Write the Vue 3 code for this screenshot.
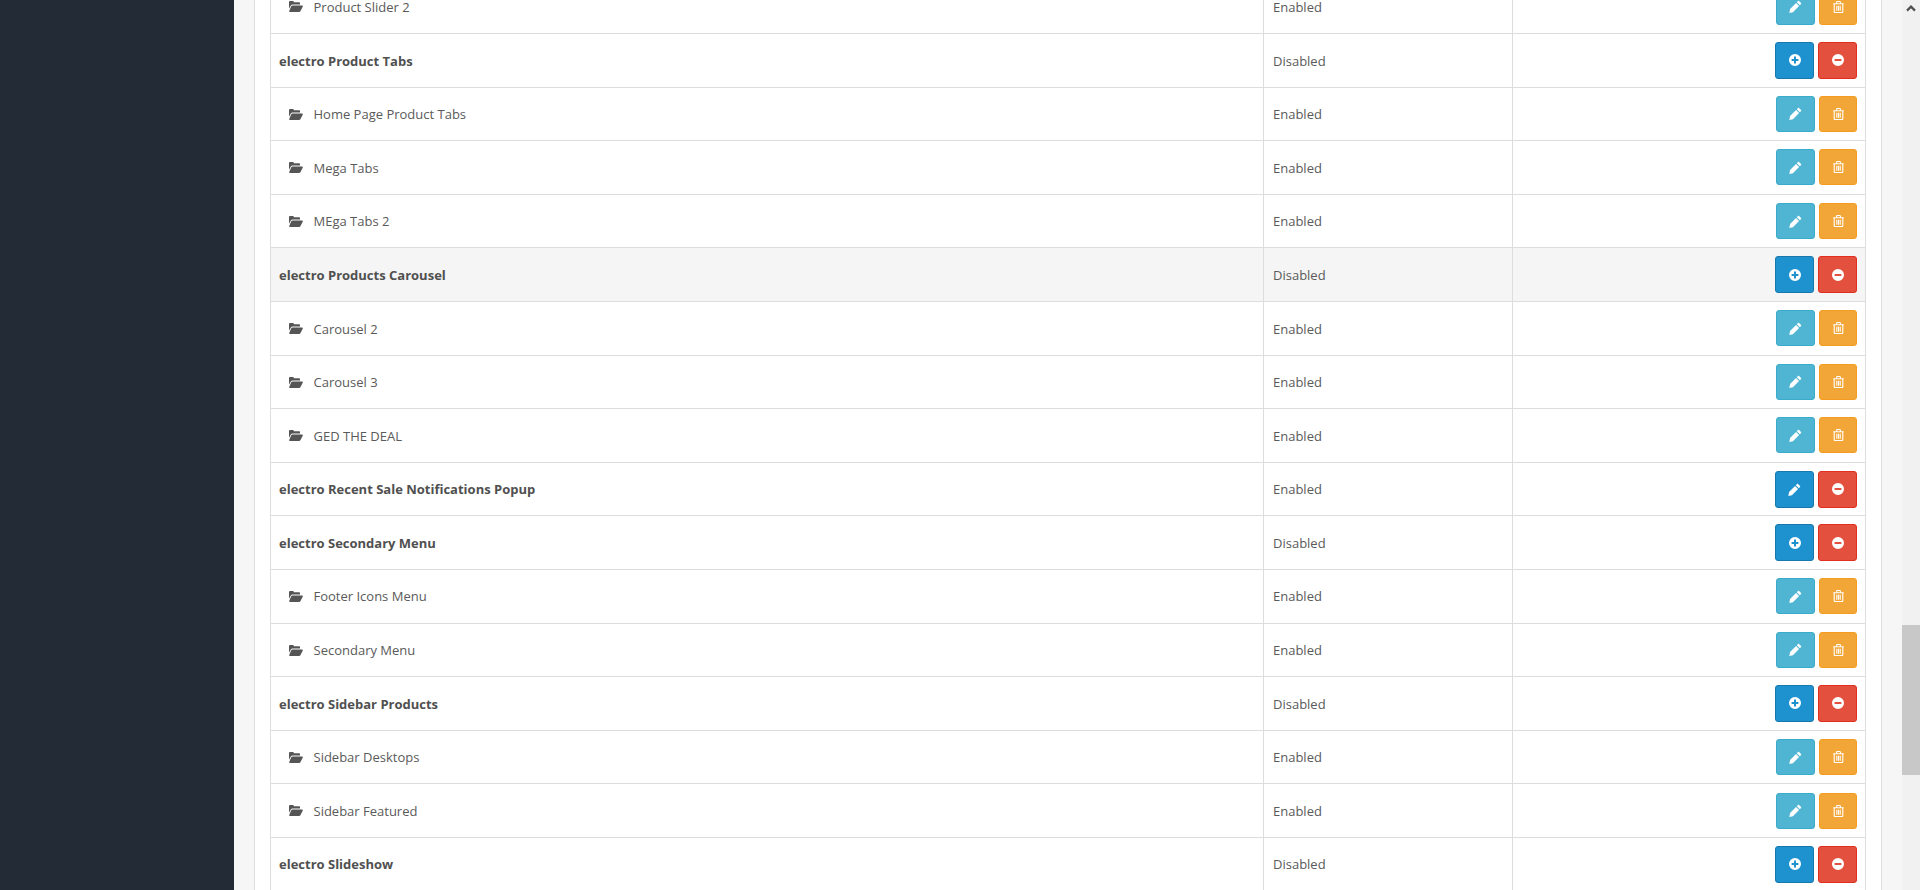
<script setup>
const rows = [
  { name: 'Product Slider 2', status: 'Enabled', kind: 'child' },
  { name: 'electro Product Tabs', status: 'Disabled', kind: 'add' },
  { name: 'Home Page Product Tabs', status: 'Enabled', kind: 'child' },
  { name: 'Mega Tabs', status: 'Enabled', kind: 'child' },
  { name: 'MEga Tabs 2', status: 'Enabled', kind: 'child' },
  { name: 'electro Products Carousel', status: 'Disabled', kind: 'add', hover: true },
  { name: 'Carousel 2', status: 'Enabled', kind: 'child' },
  { name: 'Carousel 3', status: 'Enabled', kind: 'child' },
  { name: 'GED THE DEAL', status: 'Enabled', kind: 'child' },
  { name: 'electro Recent Sale Notifications Popup', status: 'Enabled', kind: 'edit' },
  { name: 'electro Secondary Menu', status: 'Disabled', kind: 'add' },
  { name: 'Footer Icons Menu', status: 'Enabled', kind: 'child' },
  { name: 'Secondary Menu', status: 'Enabled', kind: 'child' },
  { name: 'electro Sidebar Products', status: 'Disabled', kind: 'add' },
  { name: 'Sidebar Desktops', status: 'Enabled', kind: 'child' },
  { name: 'Sidebar Featured', status: 'Enabled', kind: 'child' },
  { name: 'electro Slideshow', status: 'Disabled', kind: 'add' },
]
const pencil = 'M9.3.9 11.1 2.7c.3.3.3.7 0 1L10 4.8 7.2 2 8.3.9c.3-.3.7-.3 1 0ZM6.5 2.7 9.3 5.5 3.6 11.2.3 12l.7-3.6Z'
const plus = 'M6 0a6 6 0 1 0 0 12A6 6 0 0 0 6 0ZM5 2.6h2V5h2.4v2H7v2.4H5V7H2.6V5H5Z'
const minus = 'M6 0a6 6 0 1 0 0 12A6 6 0 0 0 6 0ZM2.6 5h6.8v2H2.6Z'
</script>

<template>
  <div class="page">
    <aside class="sidebar"></aside>
    <main class="main">
      <section class="panel">
        <div class="table">
          <div v-for="row in rows" :key="row.name" class="row" :class="{ hover: row.hover }">
            <div class="cell name" :class="{ strong: row.kind !== 'child' }">
              <svg v-if="row.kind === 'child'" class="folder" viewBox="0 0 14 11" width="14" height="11">
                <path d="M0 1.2C0 .5.5 0 1.2 0h2.6c.6 0 1 .5 1 1v.3H10c.6 0 1 .4 1 1V3.4H3.6c-.8 0-1.4.4-1.8 1L0 7.8Z" />
                <path d="M3.4 4.4H13c.7 0 1.1.6.8 1.2L11.5 10c-.3.6-.8 1-1.5 1H.9C.3 11-.1 10.4.2 9.9L2.4 5c.2-.4.6-.6 1-.6Z" />
              </svg>
              <span>{{ row.name }}</span>
            </div>
            <div class="cell status">{{ row.status }}</div>
            <div class="cell actions">
              <template v-if="row.kind === 'child'">
                <button class="btn info">
                  <svg viewBox="0 0 12 12" width="13" height="13"><path :d="pencil" /></svg>
                </button>
                <button class="btn warning">
                  <svg class="trash" viewBox="0 0 11 12" width="11" height="12">
                    <path d="M1.2 3v7.6c0 .6.4 1 1 1h6.6c.6 0 1-.4 1-1V3M.2 2.8h10.6M3.6 2.6V1.3c0-.5.3-.8.8-.8h2.2c.5 0 .8.3.8.8v1.3M3.8 4.8v4.9M5.5 4.8v4.9M7.2 4.8v4.9" />
                  </svg>
                </button>
              </template>
              <template v-else>
                <button class="btn primary">
                  <svg viewBox="0 0 12 12" :width="row.kind === 'add' ? 12 : 13" :height="row.kind === 'add' ? 12 : 13"><path fill-rule="evenodd" :d="row.kind === 'add' ? plus : pencil" /></svg>
                </button>
                <button class="btn danger">
                  <svg viewBox="0 0 12 12" width="12" height="12"><path fill-rule="evenodd" :d="minus" /></svg>
                </button>
              </template>
            </div>
          </div>
        </div>
      </section>
    </main>
    <div class="scrollbar">
      <svg class="arrow" viewBox="0 0 10 7" width="10" height="7">
        <path d="M1 5.6 5 1.6l4 4" />
      </svg>
      <div class="thumb"></div>
    </div>
  </div>
</template>

<style>
html, body { margin: 0; height: 890px; overflow: hidden; }
</style>

<style scoped>
.page {
  display: flex;
  height: 890px;
  overflow: hidden;
  font-family: "Open Sans", sans-serif;
  font-size: 13px;
  color: #5a5a5a;
}
.sidebar { flex: 0 0 234px; background: #232b37; }
.main {
  flex: 1;
  min-width: 0;
  padding: 0 20px;
  background: #f6f6f6;
}
.panel {
  display: flow-root;
  box-sizing: border-box;
  height: 890px;
  overflow: hidden;
  padding: 0 15px;
  background: #fff;
  border-left: 1px solid #ddd;
  border-right: 1px solid #ddd;
}
.table {
  margin-top: -20.6px;
  border-left: 1px solid #ddd;
  border-right: 1px solid #ddd;
}
.row {
  display: grid;
  grid-template-columns: 992px 249px 1fr;
  height: 53.6px;
  box-sizing: border-box;
  border-top: 1px solid #ddd;
}
.row.hover { background: #f5f5f5; }
.cell {
  display: flex;
  align-items: center;
  padding: 0 8px;
  min-width: 0;
}
.name, .status { padding-top: 0.5px; }
.name.strong { font-weight: 700; color: #505050; }
.folder { margin: 0 10.5px 0 10px; fill: #555; flex: none; }
.status, .actions { border-left: 1px solid #ddd; }
.status { padding-left: 9px; }
.actions { justify-content: flex-end; gap: 4px; }
.btn {
  display: flex;
  align-items: center;
  justify-content: center;
  box-sizing: border-box;
  padding: 0;
  width: 39px;
  height: 37px;
  border-radius: 3px;
  border: 1px solid transparent;
  fill: #fff;
}
.primary { background: #1e91cf; border-color: #1978ab; }
.danger { background: #e3503e; border-color: #e12e1e; }
.info { height: 36px; background: #4fb5d3; border-color: #3aabcb; }
.warning { width: 38px; height: 36px; background: #f3a638; border-color: #f39c1f; }
.trash { fill: none; stroke: #fff; stroke-width: 1.1; }
.scrollbar {
  position: relative;
  flex: 0 0 18px;
  background: #f1f1f1;
}
.arrow {
  position: absolute;
  top: 5px;
  left: 4px;
  fill: none;
  stroke: #505050;
  stroke-width: 2.2;
}
.thumb {
  position: absolute;
  top: 625px;
  left: 0;
  right: 0;
  height: 150px;
  background: #c8c8c8;
}
</style>
